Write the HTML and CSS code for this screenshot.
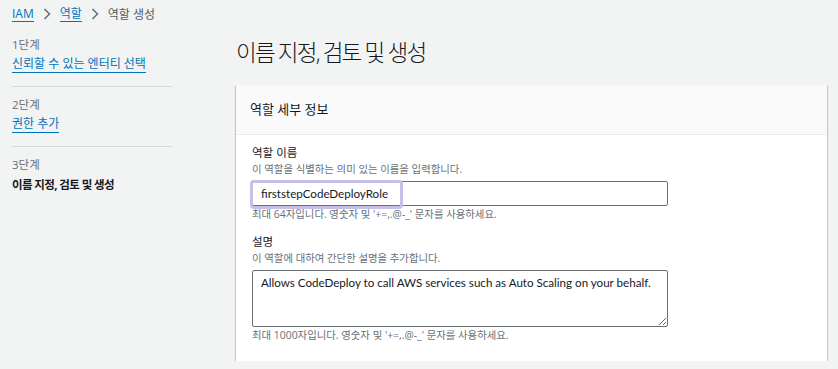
FILE: index.html
```html
<!DOCTYPE html>
<html lang="ko">
<head>
  <meta charset="UTF-8">
  <title>역할 생성 - IAM</title>
  <link rel="stylesheet" href="styles.css">
</head>
<body>
  <!-- Breadcrumbs -->
  <nav class="breadcrumbs">
    <a href="#">IAM</a>
    <span class="chevron"><svg width="8" height="12" viewBox="0 0 8 12"><path d="M1.5 1 L6.5 6 L1.5 11" fill="none" stroke="#687078" stroke-width="1.6"/></svg></span>
    <a href="#">역할</a>
    <span class="chevron"><svg width="8" height="12" viewBox="0 0 8 12"><path d="M1.5 1 L6.5 6 L1.5 11" fill="none" stroke="#687078" stroke-width="1.6"/></svg></span>
    <span class="current">역할 생성</span>
  </nav>

  <div class="layout">
    <!-- Wizard steps -->
    <ul class="steps">
      <li>
        <span class="step-num">1단계</span>
        <a href="#" class="step-link">신뢰할 수 있는 엔터티 선택</a>
      </li>
      <li>
        <span class="step-num">2단계</span>
        <a href="#" class="step-link">권한 추가</a>
      </li>
      <li>
        <span class="step-num">3단계</span>
        <span class="step-active">이름 지정, 검토 및 생성</span>
      </li>
    </ul>

    <!-- Main content -->
    <main class="content">
      <h1>이름 지정, 검토 및 생성</h1>

      <div class="card">
        <div class="card-header">역할 세부 정보</div>
        <div class="card-body">
          <div class="field">
            <label class="field-label" for="roleName">역할 이름</label>
            <div class="field-desc">이 역할을 식별하는 의미 있는 이름을 입력합니다.</div>
            <div class="input-wrap">
              <input type="text" id="roleName" class="text-input" value="firststepCodeDeployRole">
              <span class="mark"></span>
            </div>
            <div class="field-hint">최대 64자입니다. 영숫자 및 '+=,.@-_' 문자를 사용하세요.</div>
          </div>

          <div class="field">
            <label class="field-label" for="roleDesc">설명</label>
            <div class="field-desc">이 역할에 대하여 간단한 설명을 추가합니다.</div>
            <textarea id="roleDesc" class="text-area">Allows CodeDeploy to call AWS services such as Auto Scaling on your behalf.</textarea>
            <div class="field-hint">최대 1000자입니다. 영숫자 및 '+=,.@-_' 문자를 사용하세요.</div>
          </div>
        </div>
      </div>
    </main>
  </div>
</body>
</html>
```

FILE: styles.css
```css
body { margin: 0; background-color: #f2f3f3; font-family: "Open Sans", "Noto Sans CJK KR", sans-serif; color: #16191f; font-size: 13px; }
a { color: #0073bb; text-decoration: none; border-bottom: 1px solid #0073bb; }

/* Breadcrumbs */
.breadcrumbs { display: flex; align-items: center; height: 28px; padding: 0 0 0 12px; font-size: 12px; }
.breadcrumbs a { line-height: 15px; }
.breadcrumbs .chevron { display: flex; margin: 0 9px; }
.breadcrumbs .current { color: #545b64; }

.layout { display: flex; padding-left: 12px; }

/* Steps */
.steps { list-style: none; margin: 0; padding: 0; width: 160px; flex-shrink: 0; }
.steps li { display: flex; flex-direction: column; align-items: flex-start; padding: 9px 0 13px; border-bottom: 1px solid #d5dbdb; }
.steps li:first-child { padding-top: 8px; }
.steps li:last-child { border-bottom: none; }
.step-num { font-size: 11.5px; color: #687078; line-height: 18px; }
.step-link { font-size: 12px; line-height: 17px; margin-top: 1px; }
.step-active { font-size: 11.5px; font-weight: bold; line-height: 17px; margin-top: 2px; letter-spacing: -0.6px; }

/* Content */
.content { flex: 1; margin-left: 64px; margin-right: 11px; }
h1 { margin: 8px 0 15px; font-size: 22.5px; font-weight: 300; line-height: 34px; letter-spacing: -1.8px; color: #16191f; }

.card { background: #fff; box-shadow: 0 1px 1px 0 rgba(0,28,36,0.3), 1px 1px 1px 0 rgba(0,28,36,0.15), -1px 1px 1px 0 rgba(0,28,36,0.15); }
.card-header { background: #fafafa; border-bottom: 1px solid #eaeded; padding: 0 14px; height: 49px; line-height: 49px; font-size: 13px; color: #16191f; }
.card-body { padding: 9px 16px 18px; }

.field { margin-bottom: 11px; }
.field:last-child { margin-bottom: 0; }
.field-label { display: block; font-size: 11.5px; line-height: 18px; color: #16191f; }
.field-desc { font-size: 10.4px; line-height: 15px; color: #687078; margin-bottom: 4px; }
.field-hint { font-size: 10.4px; line-height: 15px; color: #687078; margin-top: 1px; }

.input-wrap { position: relative; width: 416px; }
.text-input { display: block; box-sizing: border-box; width: 416px; height: 25px; margin: 0; padding: 0 8px; border: 1px solid #687078; border-radius: 2px; font-family: "Lato", "Open Sans", sans-serif; font-size: 11.6px; color: #16191f; background: #fff; outline: none; }
/* highlight box over the typed name */
.mark { position: absolute; left: -2px; top: -1px; width: 147px; height: 23px; border: 3px solid #c7bfe8; border-radius: 4px; pointer-events: none; }

.text-area { display: block; box-sizing: border-box; width: 416px; height: 57px; margin: 0; padding: 3px 8px; border: 1px solid #687078; border-radius: 2px; font-family: "Lato", "Open Sans", sans-serif; font-size: 11.6px; line-height: 17px; color: #16191f; background: #fff; resize: both; outline: none; }
```
